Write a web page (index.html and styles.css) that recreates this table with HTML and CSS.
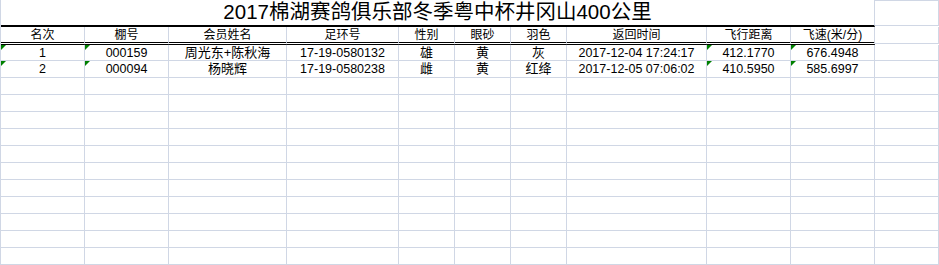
FILE: index.html
```html
<!DOCTYPE html>
<html lang="zh-CN">
<head>
<meta charset="utf-8">
<title>2017棉湖赛鸽俱乐部冬季粤中杯井冈山400公里</title>
<link rel="stylesheet" href="styles.css">
</head>
<body>
<div class="sheet">
  <div class="row row-title">
    <div class="cell title">2017棉湖赛鸽俱乐部冬季粤中杯井冈山400公里</div>
    <div class="cell extra extra-title"></div>
  </div>
  <div class="row row-head">
    <div class="cell head">名次</div>
    <div class="cell head">棚号</div>
    <div class="cell head">会员姓名</div>
    <div class="cell head">足环号</div>
    <div class="cell head">性别</div>
    <div class="cell head">眼砂</div>
    <div class="cell head">羽色</div>
    <div class="cell head">返回时间</div>
    <div class="cell head">飞行距离</div>
    <div class="cell head">飞速(米/分)</div>
    <div class="cell extra extra-head"></div>
  </div>
  <div class="row row-first">
    <div class="cell flag">1</div>
    <div class="cell flag">000159</div>
    <div class="cell cn">周光东+陈秋海</div>
    <div class="cell">17-19-0580132</div>
    <div class="cell cn">雄</div>
    <div class="cell cn">黄</div>
    <div class="cell cn">灰</div>
    <div class="cell">2017-12-04 17:24:17</div>
    <div class="cell flag">412.1770</div>
    <div class="cell flag">676.4948</div>
    <div class="cell"></div>
  </div>
  <div class="row">
    <div class="cell flag">2</div>
    <div class="cell flag">000094</div>
    <div class="cell cn">杨晓辉</div>
    <div class="cell">17-19-0580238</div>
    <div class="cell cn">雌</div>
    <div class="cell cn">黄</div>
    <div class="cell cn">红绛</div>
    <div class="cell">2017-12-05 07:06:02</div>
    <div class="cell flag">410.5950</div>
    <div class="cell flag">585.6997</div>
    <div class="cell"></div>
  </div>
  <div class="row"><div class="cell"></div><div class="cell"></div><div class="cell"></div><div class="cell"></div><div class="cell"></div><div class="cell"></div><div class="cell"></div><div class="cell"></div><div class="cell"></div><div class="cell"></div><div class="cell"></div></div>
  <div class="row"><div class="cell"></div><div class="cell"></div><div class="cell"></div><div class="cell"></div><div class="cell"></div><div class="cell"></div><div class="cell"></div><div class="cell"></div><div class="cell"></div><div class="cell"></div><div class="cell"></div></div>
  <div class="row"><div class="cell"></div><div class="cell"></div><div class="cell"></div><div class="cell"></div><div class="cell"></div><div class="cell"></div><div class="cell"></div><div class="cell"></div><div class="cell"></div><div class="cell"></div><div class="cell"></div></div>
  <div class="row"><div class="cell"></div><div class="cell"></div><div class="cell"></div><div class="cell"></div><div class="cell"></div><div class="cell"></div><div class="cell"></div><div class="cell"></div><div class="cell"></div><div class="cell"></div><div class="cell"></div></div>
  <div class="row"><div class="cell"></div><div class="cell"></div><div class="cell"></div><div class="cell"></div><div class="cell"></div><div class="cell"></div><div class="cell"></div><div class="cell"></div><div class="cell"></div><div class="cell"></div><div class="cell"></div></div>
  <div class="row"><div class="cell"></div><div class="cell"></div><div class="cell"></div><div class="cell"></div><div class="cell"></div><div class="cell"></div><div class="cell"></div><div class="cell"></div><div class="cell"></div><div class="cell"></div><div class="cell"></div></div>
  <div class="row"><div class="cell"></div><div class="cell"></div><div class="cell"></div><div class="cell"></div><div class="cell"></div><div class="cell"></div><div class="cell"></div><div class="cell"></div><div class="cell"></div><div class="cell"></div><div class="cell"></div></div>
  <div class="row"><div class="cell"></div><div class="cell"></div><div class="cell"></div><div class="cell"></div><div class="cell"></div><div class="cell"></div><div class="cell"></div><div class="cell"></div><div class="cell"></div><div class="cell"></div><div class="cell"></div></div>
  <div class="row"><div class="cell"></div><div class="cell"></div><div class="cell"></div><div class="cell"></div><div class="cell"></div><div class="cell"></div><div class="cell"></div><div class="cell"></div><div class="cell"></div><div class="cell"></div><div class="cell"></div></div>
  <div class="row"><div class="cell"></div><div class="cell"></div><div class="cell"></div><div class="cell"></div><div class="cell"></div><div class="cell"></div><div class="cell"></div><div class="cell"></div><div class="cell"></div><div class="cell"></div><div class="cell"></div></div>
  <div class="row"><div class="cell"></div><div class="cell"></div><div class="cell"></div><div class="cell"></div><div class="cell"></div><div class="cell"></div><div class="cell"></div><div class="cell"></div><div class="cell"></div><div class="cell"></div><div class="cell"></div></div>
</div>
</body>
</html>
```

FILE: styles.css
```css
html, body {
  margin: 0;
  padding: 0;
  background: #ffffff;
  overflow: hidden;
}

.sheet {
  width: 939px;
  box-sizing: border-box;
  border-left: 1px solid #d0d7e5;
  font-family: "Liberation Sans", "Noto Sans CJK SC", sans-serif;
  font-size: 12.5px;
  color: #000000;
}

.row {
  display: grid;
  grid-template-columns: 84px 84px 118px 112px 56px 56px 56px 140px 84px 84px 64px;
  height: 17px;
  align-items: start;
}

.cell {
  position: relative;
  box-sizing: border-box;
  height: 17px;
  border-right: 1px solid #d0d7e5;
  border-bottom: 1px solid #d0d7e5;
  display: flex;
  align-items: center;
  justify-content: center;
  line-height: 16px;
  white-space: nowrap;
}

.cn {
  font-size: 13px;
}

.row-title {
  height: 27px;
}

.title {
  grid-column: span 10;
  height: 27px;
  border-bottom: 2px solid #000000;
  font-size: 20.5px;
  line-height: 24px;
  align-items: flex-end;
  padding-bottom: 1px;
}

.extra-title {
  height: 26px;
  border-top: 1px solid #d0d7e5;
}

.row-head {
  height: 18px;
}

.head {
  height: 18px;
  border-bottom: 3px double #000000;
  font-size: 12px;
  padding-top: 1px;
}

.extra-head {
  height: 17px;
}

.row-first {
  height: 16px;
}

.row-first .cell {
  height: 16px;
}

.flag::before {
  content: "";
  position: absolute;
  left: 0;
  top: 0;
  width: 0;
  height: 0;
  border-top: 5px solid #008000;
  border-right: 5px solid transparent;
}
```
